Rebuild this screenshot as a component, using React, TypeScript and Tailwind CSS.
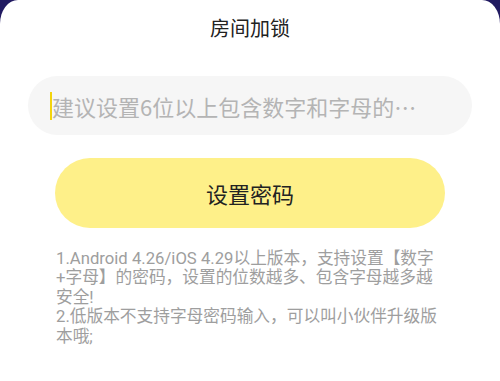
export default function App() {
  const notes =
    '1.Android 4.26/iOS 4.29以上版本，支持设置【数字+字母】的密码，设置的位数越多、包含字母越多越安全!\n2.低版本不支持字母密码输入，可以叫小伙伴升级版本哦;';

  return (
    <div className="w-[500px] h-[381px] bg-[#211a61] overflow-hidden font-['Noto_Sans_CJK_SC',sans-serif]">
      {/* Bottom sheet */}
      <div className="h-full bg-white rounded-t-[18px_24px] flex flex-col">
        <h2 className="pt-[14px] text-center text-[20px] leading-[28px] text-[#222]">房间加锁</h2>

        {/* Password input */}
        <div className="mx-[28px] mt-[34px] h-[59px] rounded-full bg-[#f6f6f6] flex items-center pl-[22px] pr-[47px]">
          <span className="w-[2px] h-[28px] bg-[#f3d40c] shrink-0" />
          <span className="truncate text-[22px] leading-[30px] text-[#b4b4b4]">
            建议设置6位以上包含数字和字母的密码
          </span>
        </div>

        <button className="mx-[55px] mt-[23px] h-[70px] rounded-full bg-[#fef089] text-[22px] text-[#222]">
          设置密码
        </button>

        <p className="ml-[56px] mt-[21px] w-[384px] whitespace-pre-line font-['Roboto','Noto_Sans_CJK_SC',sans-serif] text-[16.7px] leading-[19.4px] text-[#9e9e9e]">
          {notes}
        </p>
      </div>
    </div>
  );
}
